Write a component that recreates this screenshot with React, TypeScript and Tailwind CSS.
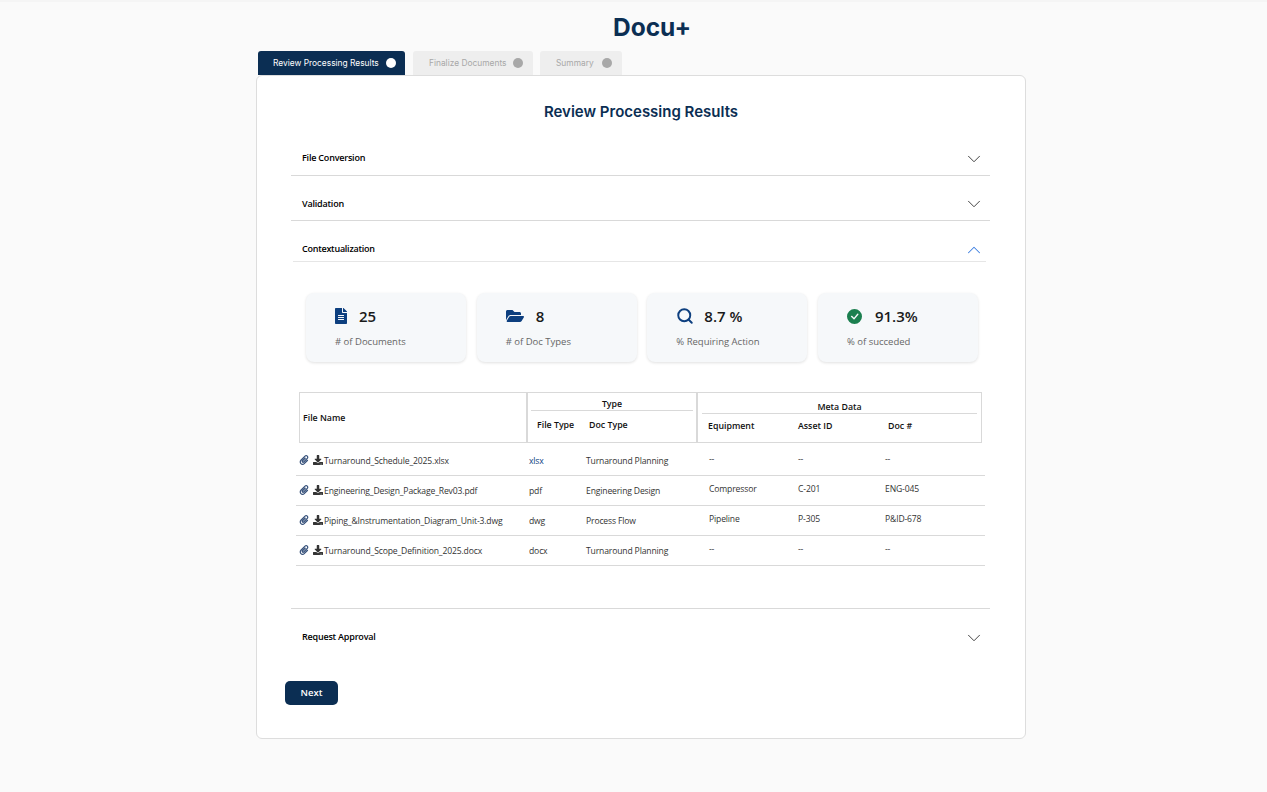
import { BsCheckCircleFill } from "react-icons/bs";
import { FaFileAlt, FaFolderOpen, FaPaperclip, FaDownload } from "react-icons/fa";
import { ChevronDown, ChevronUp, Search } from "lucide-react";
import type { ReactNode } from "react";

const rows = [
  ["Turnaround_Schedule_2025.xlsx", "xlsx", "Turnaround Planning", "--", "--", "--"],
  ["Engineering_Design_Package_Rev03.pdf", "pdf", "Engineering Design", "Compressor", "C-201", "ENG-045"],
  ["Piping_&Instrumentation_Diagram_Unit-3.dwg", "dwg", "Process Flow", "Pipeline", "P-305", "P&ID-678"],
  ["Turnaround_Scope_Definition_2025.docx", "docx", "Turnaround Planning", "--", "--", "--"],
];

function Section({ label, className, labelClass }: { label: string; className: string; labelClass?: string }) {
  return (
    <div className={`flex items-center justify-between pl-[11px] pr-[5px] ${className}`}>
      <span className={`text-[9px] font-semibold tracking-[-0.2px] text-black ${labelClass ?? ""}`}>{label}</span>
      <ChevronDown size={22} strokeWidth={1} className="mt-[1px] text-[#333]" />
    </div>
  );
}

function Stat({ icon, value, label, gap }: { icon: ReactNode; value: string; label: string; gap: string }) {
  return (
    <div className="h-[69px] w-[160px] rounded-lg bg-[#f6f8fa] pl-[29px] pt-[13px] shadow-[0_1px_3px_rgba(0,0,0,0.12)]">
      <div className={`flex h-[20px] items-center ${gap}`}>
        {icon}
        <span className="text-[15px] font-semibold text-[#1a1a1a]">{value}</span>
      </div>
      <div className="mt-[9px] text-[9.5px] leading-[14px] text-[#666]">{label}</div>
    </div>
  );
}

export default function App() {
  return (
    <div
      className="min-h-[792px] border-t-2 border-[#f5f5f5] bg-[#fafafa] pt-[10px]"
      style={{ fontFamily: '"Open Sans", sans-serif' }}
    >
      <div className="ml-[256px] w-[770px] font-['Inter',sans-serif]">
        <h1 className="pl-[22px] text-center text-[24.5px] font-bold leading-[30px] text-[#0b2e53]">Docu+</h1>
        <div className="relative z-10 mt-[9px] flex h-[24px] items-stretch gap-[8px] pl-[2px] text-[8.4px]">
          <div className="flex w-[147px] items-center gap-[7px] rounded-t-[3px] bg-[#0b2e53] pl-[15px] pt-[1px] text-white">
            <span>Review Processing Results</span>
            <span className="-mt-[1px] h-[10px] w-[10px] rounded-full bg-white" />
          </div>
          <div className="flex w-[120px] items-center gap-[7px] rounded-t-[3px] bg-[#eeeeee] pl-[16px] pt-[1px] text-[#a8a8a8]">
            <span>Finalize Documents</span>
            <span className="-mt-[1px] h-[10px] w-[10px] rounded-full bg-[#a8a8a8]" />
          </div>
          <div className="-ml-[1px] flex w-[82px] items-center gap-[8px] rounded-t-[3px] bg-[#eeeeee] pl-[16px] pt-[1px] text-[#a8a8a8]">
            <span>Summary</span>
            <span className="-mt-[1px] h-[10px] w-[10px] rounded-full bg-[#a8a8a8]" />
          </div>
        </div>

        <div className="h-[664px] rounded-md border border-[#dddddd] bg-white" style={{ fontFamily: '"Open Sans", sans-serif' }}>
          <h2 className="mt-[26px] text-center text-[15px] font-semibold leading-[20px] text-[#0b2e53] font-['Inter',sans-serif]">
            Review Processing Results
          </h2>
          <div className="mx-[34px] mt-[19px] w-[699px]">
            <Section label="File Conversion" className="h-[35px] border-b border-[#d9d9d9]" />
            <Section label="Validation" labelClass="mt-[2px]" className="mt-[10px] h-[35px] border-b border-[#d9d9d9]" />
            <div className="ml-[2px] mr-[4px] mt-[14px] flex h-[27px] items-center justify-between border-b border-[#e6e6e6] pl-[9px] pr-[1px]">
              <span className="mt-[2px] text-[9px] font-semibold tracking-[-0.25px] text-black">Contextualization</span>
              <ChevronUp size={22} strokeWidth={1.1} className="mt-[3px] text-[#3b7de0]" />
            </div>

            <div className="mt-[31px] flex gap-[10.67px] pl-[15px]">
              <Stat gap="gap-[12px]" icon={<FaFileAlt className="h-[16px] w-[12px] text-[#0d3f7f]" />} value="25" label="# of Documents" />
              <Stat gap="gap-[12px]" icon={<FaFolderOpen size={18} className="text-[#0d3f7f]" />} value="8" label="# of Doc Types" />
              <Stat gap="gap-[10px]" icon={<Search size={18} strokeWidth={2.6} className="text-[#0d3f7f]" />} value="8.7 %" label="% Requiring Action" />
              <Stat gap="gap-[13px]" icon={<BsCheckCircleFill size={15} className="text-[#1b7f4f]" />} value="91.3%" label="% of succeded" />
            </div>

            <div className="ml-[8px] mt-[30px] flex h-[51px] w-[683px] border border-[#d9d9d9] text-[8.8px] font-semibold text-[#111]">
              <div className="flex w-[228px] shrink-0 items-center border-r-2 border-[#d9d9d9] pl-[3px] pt-[2px]">File Name</div>
              <div className="w-[170px] shrink-0 border-r-2 border-[#d9d9d9] pl-[3px] pr-[3px]">
                <div className="h-[18px] border-b border-[#d9d9d9] text-center leading-[23px]">Type</div>
                <div className="flex pl-[6px] pt-[7px] leading-[14px]">
                  <span className="w-[52px]">File Type</span>
                  <span>Doc Type</span>
                </div>
              </div>
              <div className="flex-1 px-[4px]">
                <div className="h-[21px] border-b border-[#d9d9d9] text-center leading-[29px]">Meta Data</div>
                <div className="flex pl-[6px] pt-[5px] leading-[14px]">
                  <span className="w-[90px]">Equipment</span>
                  <span className="w-[90px]">Asset ID</span>
                  <span>Doc #</span>
                </div>
              </div>
            </div>

            <div className="ml-[5px] w-[689px] text-[8.6px] tracking-[-0.15px] text-[#333]">
              {rows.map((r, i) => (
                <div
                  key={r[0]}
                  className={`flex items-center border-b border-[#d9d9d9] ${i === 0 ? "h-[33px] pt-[4px]" : "h-[30px] pt-[1px]"}`}
                >
                  <div className="flex w-[233px] shrink-0 items-center pl-[3px]">
                    <FaPaperclip size={10} className="mb-[2px] text-[#35507a]" />
                    <FaDownload size={10} className="mb-[2px] ml-[4px] text-[#333]" />
                    <span className="ml-[1px] whitespace-nowrap">{r[0]}</span>
                  </div>
                  <span className={`w-[57px] shrink-0 ${i === 0 ? "text-[#0d3f7f]" : ""}`}>{r[1]}</span>
                  <span className="w-[123px] shrink-0">{r[2]}</span>
                  <span className="mb-[3px] w-[89px] shrink-0">{r[3]}</span>
                  <span className="mb-[3px] w-[87px] shrink-0">{r[4]}</span>
                  <span className="mb-[3px]">{r[5]}</span>
                </div>
              ))}
            </div>

            <Section label="Request Approval" className="mt-[42px] h-[57px] border-t border-[#d9d9d9]" />
          </div>
          <button className="ml-[28px] mt-[16px] block h-[24px] w-[53px] rounded-[5px] bg-[#0b2e53] text-[9.5px] font-semibold text-white">
            Next
          </button>
        </div>
      </div>
    </div>
  );
}
